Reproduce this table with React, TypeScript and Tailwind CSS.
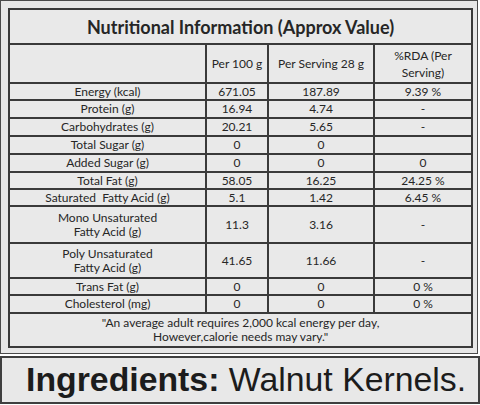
const rows: [string[], string, string, string, number][] = [
  [['Energy (kcal)'], '671.05', '187.89', '9.39 %', 17],
  [['Protein (g)'], '16.94', '4.74', '-', 18],
  [['Carbohydrates (g)'], '20.21', '5.65', '-', 18],
  [['Total Sugar (g)'], '0', '0', '', 18],
  [['Added Sugar (g)'], '0', '0', '0', 18],
  [['Total Fat (g)'], '58.05', '16.25', '24.25 %', 17],
  [['Saturated\u00a0 Fatty Acid (g)'], '5.1', '1.42', '6.45 %', 17],
  [['Mono Unsaturated', 'Fatty Acid (g)'], '11.3', '3.16', '-', 37],
  [['Poly Unsaturated', 'Fatty Acid (g)'], '41.65', '11.66', '-', 35],
  [['Trans Fat (g)'], '0', '0', '0 %', 17],
  [['Cholesterol (mg)'], '0', '0', '0 %', 18],
]

const cell = 'border-2 border-[#3a3a3a] text-center align-middle p-0'

export default function App() {
  return (
    <div className="w-[480px] h-[405px] bg-white flex flex-col text-[#262626] font-['Lato',sans-serif]">
      <div className="w-[478px] h-[354px] border border-[#4a4a4a] bg-[#e7e7e7] pt-[7px] pl-[7px]">
        <table className="border-collapse table-fixed w-[463px] bg-[#e9e9e9] text-[12px] leading-[14px]">
          <colgroup>
            <col className="w-[197px]" />
            <col className="w-[62px]" />
            <col className="w-[106px]" />
            <col className="w-[98px]" />
          </colgroup>
          <tbody>
            <tr>
              <td colSpan={4} className={`${cell} h-[35px] text-[18px] font-bold`}>
                Nutritional Information (Approx Value)
              </td>
            </tr>
            <tr>
              <td className={`${cell} h-[39px]`}></td>
              <td className={`${cell} h-[39px]`}>Per 100 g</td>
              <td className={`${cell} h-[39px]`}>Per Serving 28 g</td>
              <td className={`${cell} h-[39px] leading-[17px]`}>
                %RDA (Per
                <br />
                Serving)
              </td>
            </tr>
            {rows.map(([label, a, b, c, h], i) => (
              <tr key={i}>
                <td className={cell} style={{ height: h }}>
                  {label.map((l, j) => (
                    <div key={j}>{l}</div>
                  ))}
                </td>
                <td className={cell}>{a}</td>
                <td className={cell}>{b}</td>
                <td className={cell}>{c}</td>
              </tr>
            ))}
            <tr>
              <td colSpan={4} className={`${cell} h-[34px] leading-[14px] text-[12px]`}>
                "An average adult requires 2,000 kcal energy per day,
                <br />
                However,calorie needs may vary."
              </td>
            </tr>
          </tbody>
        </table>
      </div>
      <div className="mt-[2px] w-[480px] h-[48px] border-2 border-[#3f3f3f] bg-[#e8e8e8] flex items-center pl-[24px] font-['Liberation_Sans',Arial,sans-serif] text-[33.8px] text-[#1c1c1c] leading-none">
        <span className="font-bold">Ingredients:</span>
        <span>&nbsp;Walnut Kernels.</span>
      </div>
    </div>
  )
}
